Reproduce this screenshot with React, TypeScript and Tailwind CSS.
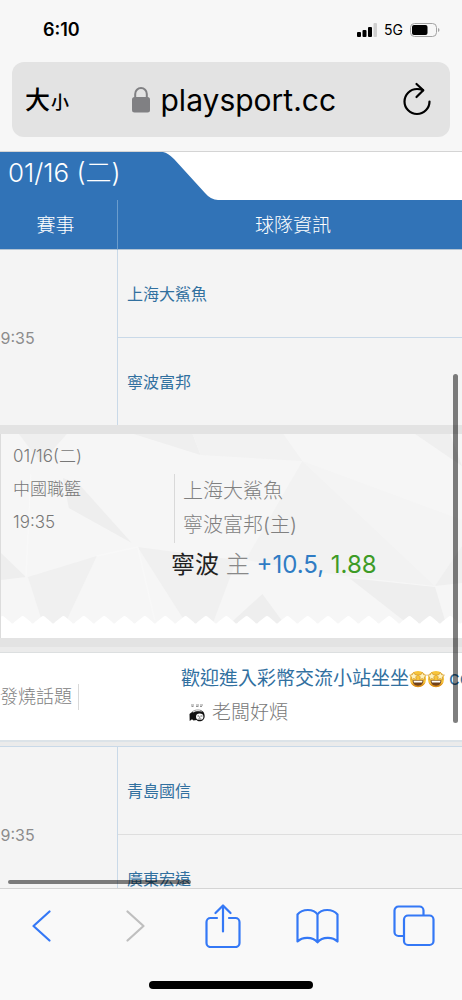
import type { ReactNode } from 'react'
import { clsx } from 'clsx'

const FACETS = [
  { points: '18,0 66,0 40,29', fill: '#efefef' },
  { points: '133,0 192,0 200,21', fill: '#efefef' },
  { points: '192,0 283,0 302,27 200,21', fill: '#f2f2f2' },
  { points: '415,0 450,0 462,32', fill: '#efefef' },
  { points: '302,27 435,152 344,142 245,126', fill: '#f2f2f2' },
  { points: '302,27 462,86 462,116 435,152', fill: '#f4f4f4' },
  { points: '349,144 435,153 446,190 408,190', fill: '#eeeeee' },
  { points: '435,152 462,112 462,149', fill: '#efefef' },
  { points: '62,44 78,50 131,109 68,74', fill: '#eeeeee' },
  { points: '0,119 25,143 0,146', fill: '#eeeeee' },
  { points: '27,143 96,122 64,190 42,190', fill: '#f0f0f0' },
  { points: '137,113 236,126 212,190 186,190', fill: '#f0f0f0' },
  { points: '262,160 284,190 229,190', fill: '#eeeeee' },
]

const TEETH = Array.from({ length: 24 }, (_, i) => {
  const x = i * 20.4 - 19
  return `L${x - 2} 183 Q${x} 181 ${x + 2} 183 L${x + 8} 188 Q${x + 10} 191 ${x + 12} 188`
}).join(' ')

function SignalIcon() {
  return (
    <svg viewBox="0 0 20 14" className="h-[14px] w-5" aria-hidden>
      <rect x="0" y="9" width="4" height="5" rx="1" />
      <rect x="5.5" y="7" width="4" height="7" rx="1" />
      <rect x="11" y="4" width="4" height="10" rx="1" />
      <rect x="16.5" y="0" width="3.5" height="14" rx="1" fill="#cfcfcf" />
    </svg>
  )
}

function BatteryIcon() {
  return (
    <svg viewBox="0 0 30 14" className="h-[14px] w-[30px]" aria-hidden>
      <rect x="0.5" y="0.5" width="26" height="13" rx="4" fill="none" stroke="#a3a3a3" />
      <rect x="2" y="2" width="15.5" height="10" rx="2" />
      <path d="M28 5v4c2-.7 2-3.3 0-4Z" fill="#a3a3a3" />
    </svg>
  )
}

function LockIcon() {
  return (
    <svg viewBox="0 0 18 26" className="h-[26px] w-[18px] shrink-0" aria-hidden>
      <rect x="0" y="10" width="18" height="15.5" rx="2.5" fill="#808083" />
      <path d="M3.2 11V7a5.8 6 0 0 1 11.6 0v4" fill="none" stroke="#808083" strokeWidth="2" />
    </svg>
  )
}

function ReloadIcon() {
  return (
    <svg
      viewBox="0 0 28 34"
      className="h-[34px] w-7"
      fill="none"
      stroke="black"
      strokeWidth="2.2"
      strokeLinecap="round"
      strokeLinejoin="round"
      aria-hidden
    >
      <path d="M26.5 19.5A12.5 12.5 0 1 1 14 7c2.3 0 4.3.5 6 1.3" />
      <path d="M13.5 2l6.8 6.3L13.5 15" />
    </svg>
  )
}

function ToolIcon({ viewBox, className, children }: { viewBox: string; className: string; children: ReactNode }) {
  return (
    <svg
      viewBox={viewBox}
      className={className}
      fill="none"
      stroke="currentColor"
      strokeWidth="2.2"
      strokeLinecap="round"
      strokeLinejoin="round"
      aria-hidden
    >
      {children}
    </svg>
  )
}

function AvatarIcon() {
  return (
    <svg viewBox="0 0 16 18" className="h-[18px] w-4 shrink-0" aria-hidden>
      <path d="M2 1h3M2.5 2.5h2M7 1h3M7 2.5h2.500M11 1h3M11 2.5h2" stroke="#777" strokeWidth=".8" />
      <path d="M.5 10C4 6 12 5 14.5 8c2 3 1.500 8-2 9-2 .7-4 .3-5-1l-3 .5-1.500-1.200L.7 17Z" fill="#111" />
      <path d="M3.5 7.5c3-2 8-2.500 10.500.5-3-1-7-1-10 .7Z" fill="#fff" stroke="#333" strokeWidth=".4" />
      <ellipse cx="10.7" cy="12.7" rx="3.7" ry="3.2" fill="#fff" />
      <path d="M8.5 12h1.500M11.5 12h2M10.7 12.5v1.300M9.3 15h3" stroke="#222" strokeWidth=".7" />
    </svg>
  )
}

function StarEyesIcon() {
  return (
    <svg viewBox="0 0 20 20" className="inline-block h-[18px] w-[18px] align-[-3px]" role="img" aria-label="🤩">
      <circle cx="10" cy="10" r="9" fill="#f8c53a" />
      <path d="M1.5 13a9 9 0 0 0 17 0c-3 5-14 5-17 0Z" fill="#dd8f1d" />
      <path d="M4 11.5h12c0 4-2.500 6-6 6s-6-2-6-6Z" fill="#70401a" />
      <path d="M5 12h10l-.5 2h-9Z" fill="#fff" />
      <path
        d="m5.2 2.5 1.4 2.6 3 .4L7.5 7.7l.6 3-2.800-1.300-2.700 1.400.4-3L.6 5.700l3.100-.5ZM14.8 2.5l-1.400 2.600-3 .4 2.100 2.200-.6 3 2.800-1.300 2.700 1.400-.4-3 2.400-2.100-3.100-.5Z"
        fill="#fff3bd"
        stroke="#c98a22"
        strokeWidth=".7"
      />
    </svg>
  )
}

function StatusBar() {
  return (
    <div className="flex h-[62px] items-center justify-between pr-[22px] pl-[43px]">
      <time className="pb-[2px] text-lg font-semibold">6:10</time>
      <div className="flex items-center gap-[7px] pb-[3px]">
        <SignalIcon />
        <span className="text-sm">5G</span>
        <BatteryIcon />
      </div>
    </div>
  )
}

function AddressBar() {
  return (
    <div className="mx-3 mb-[14px] flex h-[75px] items-center rounded-xl bg-[#e3e3e3] px-[13px]">
      <button type="button" className="flex items-baseline gap-px pt-[2px] font-medium" aria-label="大小">
        <span className="text-[25px]">大</span>
        <span className="text-lg">小</span>
      </button>
      <label className="flex flex-1 items-center justify-center gap-[11px]">
        <LockIcon />
        <input
          type="text"
          aria-label="網址"
          defaultValue="playsport.cc"
          className="w-[180px] bg-transparent text-[30px] leading-10 outline-none"
        />
      </label>
      <button type="button" aria-label="重新載入" className="mr-[6px] pb-[2px]">
        <ReloadIcon />
      </button>
    </div>
  )
}

function GameRows({ time, teams, divider }: { time: string; teams: [string, string]; divider: string }) {
  return (
    <>
      <tr className="h-[88px]">
        <td rowSpan={2} className="border-r border-[#c9d9e8] text-base text-[#8c8c8c]">
          <span className="-ml-[6px] block">{time}</span>
        </td>
        <td className={clsx('border-b pl-[9px]', divider)}>
          <a href="#" className="text-base text-[#31709f]">{teams[0]}</a>
        </td>
      </tr>
      <tr className="h-[87px]">
        <td className="pl-[9px]">
          <a href="#" className="text-base text-[#31709f]">{teams[1]}</a>
        </td>
      </tr>
    </>
  )
}

function PredictionCard() {
  return (
    <article className="relative h-[204px] border-l border-[#dcdcdc] bg-[#f6f6f6]">
      <svg
        viewBox="0 0 462 204"
        preserveAspectRatio="none"
        className="absolute inset-0 size-full"
        aria-hidden
      >
        {FACETS.map((facet) => (
          <polygon key={facet.points} points={facet.points} fill={facet.fill} />
        ))}
        <path d="M25 143 30 40M137 113l17 73M137 113 96 122" stroke="#f9f9f9" fill="none" />
        <path d={`M-25 204 ${TEETH} L480 204Z`} fill="#fff" />
      </svg>
      <div className="relative flex pt-[6px] pl-3">
        <div className="w-[161px] text-[17px] leading-[33px] font-light text-[#777]">
          <p>01/16(二)</p>
          <p>中國職籃</p>
          <p>19:35</p>
        </div>
        <div className="mt-[34px] h-[69px] border-l border-[#d9d9d9] pl-2 text-xl leading-[34px] font-light text-[#808080]">
          <p>上海大鯊魚</p>
          <p>寧波富邦(主)</p>
        </div>
      </div>
      <p className="relative pt-1 pl-[170px] text-2xl leading-9 text-[#222]">
        寧波 <span className="font-light text-[#888]">主</span> <span className="text-[#2f7cc4]">+10.5,</span>{' '}
        <span className="text-[#3d9b26]">1.88</span>
      </p>
    </article>
  )
}

function HotTopic() {
  return (
    <section className="flex h-[87px] items-center overflow-hidden bg-white whitespace-nowrap">
      <h2 className="w-[79px] shrink-0 border-r border-[#d9d9d9] text-lg leading-[26px] font-light text-[#808080]">
        發燒話題
      </h2>
      <div className="ml-[102px] pb-px text-[19px] leading-[34px]">
        <a href="#" className="block text-[#31709f]">
          歡迎進入彩幣交流小站坐坐
          <StarEyesIcon />
          <StarEyesIcon />
          <span className="ml-1">cc</span>
        </a>
        <p className="flex items-center gap-[7px] pl-2 font-light text-[#777]">
          <AvatarIcon />
          老闆好煩
        </p>
      </div>
    </section>
  )
}

function Schedule() {
  return (
    <>
      <div className="flex bg-white">
        <h1 className="h-12 w-[163px] bg-[#3173b7] pl-2 text-[26px] leading-[42px] font-light text-white">
          01/16 (二)
        </h1>
        <svg viewBox="0 0 55 48" className="h-12 w-[55px] shrink-0" aria-hidden>
          <path d="M0 0Q5 1 11 7L42 41Q48 48 55 48H0Z" fill="#3173b7" />
        </svg>
      </div>
      <table className="w-full table-fixed border-separate border-spacing-0 text-left">
        <colgroup>
          <col className="w-[118px]" />
          <col />
        </colgroup>
        <thead>
          <tr className="h-[50px] bg-[#3173b7] text-[19px] text-white">
            <th className="border-r border-b border-r-[#6b9dcd] border-b-[#b3c4d4] pt-1 pr-[6px] text-center font-light">
              賽事
            </th>
            <th className="border-b border-[#b3c4d4] pt-1 pl-[6px] text-center font-light">球隊資訊</th>
          </tr>
        </thead>
        <tbody>
          <GameRows time="19:35" teams={['上海大鯊魚', '寧波富邦']} divider="border-[#c9d9e8]" />
          <tr>
            <td colSpan={2} className="border-t-[9px] border-[#e3e3e3] p-0">
              <PredictionCard />
              <div className="h-[9px] bg-[#e3e3e3]" />
              <div className="h-[6px] border-b border-[#dcdfe0] bg-[#ebebeb]" />
              <HotTopic />
              <div className="h-[7px] border-t-2 border-b border-t-[#dce3e8] border-b-[#c9d9e8] bg-[#ebebeb]" />
            </td>
          </tr>
          <GameRows time="19:35" teams={['青島國信', '廣東宏遠']} divider="border-[#dedede]" />
        </tbody>
      </table>
    </>
  )
}

function BottomToolbar() {
  return (
    <footer className="h-[112px] border-t border-[#d4d4d4] bg-[#f9f9f9]">
      <nav className="flex h-[73px] items-center justify-between pr-[27px] pl-[17px] text-[#3478f6]">
        <button type="button" aria-label="上一頁" className="flex w-12 justify-center">
          <ToolIcon viewBox="0 0 19 32" className="h-8 w-[19px]">
            <path d="M17.5 1.5 1.5 16l16 14.5" />
          </ToolIcon>
        </button>
        <button type="button" aria-label="下一頁" className="flex w-11 justify-center text-[#bfbfbf]">
          <ToolIcon viewBox="0 0 19 32" className="h-8 w-[19px]">
            <path d="m1.5 1.5 16 14.5-16 14.5" />
          </ToolIcon>
        </button>
        <button type="button" aria-label="分享" className="flex w-9 justify-center">
          <ToolIcon viewBox="0 0 36 44" className="h-11 w-9">
            <path d="M12 14H5.5a4 4 0 0 0-4 4v21a4 4 0 0 0 4 4h25a4 4 0 0 0 4-4V18a4 4 0 0 0-4-4H24M18 27.5V2M10.5 9 18 1.5 25.5 9" />
          </ToolIcon>
        </button>
        <button type="button" aria-label="書籤" className="flex w-14 justify-center">
          <ToolIcon viewBox="0 0 43 36" className="h-9 w-[43px]">
            <path d="M21.5 6.5C17.5.5 6.5.5 1.5 6.5v27c5-5 15-5 20 .8 5-5.8 15-5.8 20-.8v-27c-5-6-16-6-20 0v27.5" />
          </ToolIcon>
        </button>
        <button type="button" aria-label="分頁" className="flex w-[42px] justify-center">
          <ToolIcon viewBox="0 0 42 42" className="size-[42px]">
            <path d="M10 31H5.5a4 4 0 0 1-4-4V5.5a4 4 0 0 1 4-4h21a4 4 0 0 1 4 4V10" />
            <rect x="11" y="10.5" width="29.5" height="29.5" rx="4" />
          </ToolIcon>
        </button>
      </nav>
      <div className="mx-auto mt-[19px] h-2 w-[164px] rounded-full bg-black" />
    </footer>
  )
}

export default function App() {
  return (
    <div className="flex h-screen flex-col overflow-hidden bg-[#f7f7f7] font-['Inter','Noto_Sans_CJK_TC',sans-serif] text-black">
      <header className="border-b border-[#d4d4d4]">
        <StatusBar />
        <AddressBar />
      </header>
      <main className="relative min-h-0 flex-1 overflow-hidden bg-[#f4f4f4]">
        <Schedule />
        <div className="absolute top-[222px] right-1 h-[349px] w-[5px] rounded-full bg-black/50" />
        <div className="absolute bottom-1 left-2 h-1 w-[183px] rounded-full bg-black/50" />
      </main>
      <BottomToolbar />
    </div>
  )
}
